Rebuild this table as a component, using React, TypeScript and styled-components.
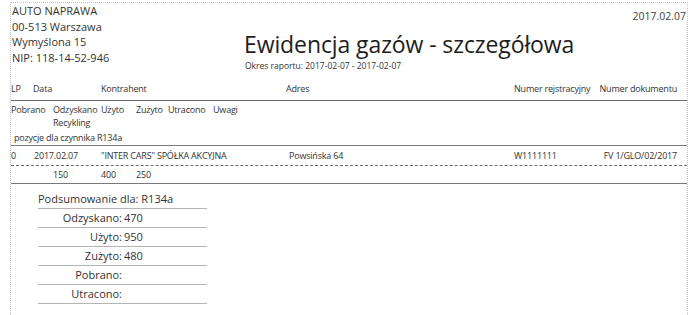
import React from 'react'
import styled, { createGlobalStyle } from 'styled-components'

const GlobalStyle = createGlobalStyle`
  html, body {
    margin: 0;
    padding: 0;
    background: #ffffff;
  }
  body {
    font-family: "Open Sans", "Noto Sans", sans-serif;
    color: #333333;
  }
`

const Page = styled.div`
  margin: 2px 0 0 10px;
  width: 678px;
  height: 313px;
  box-sizing: border-box;
  border-top: 1px dotted #c4c4c4;
  border-left: 1px dotted #c4c4c4;
  border-right: 1px dotted #c4c4c4;
  overflow: hidden;
`

const Header = styled.div`
  display: grid;
  grid-template-columns: 233px 1fr auto;
  height: 74px;
`

const Company = styled.div`
  font-size: 11px;
  line-height: 15.5px;
  color: #333;
  padding-left: 1px;
`

const TitleBlock = styled.div`
  padding-top: 27px;
`

const Title = styled.div`
  font-size: 23px;
  line-height: 28px;
  color: #1e1e1e;
  letter-spacing: -0.1px;
`

const Period = styled.div`
  font-size: 8.5px;
  line-height: 12px;
  margin-top: 2px;
  margin-left: 1px;
  color: #333;
`

const PrintDate = styled.div`
  font-size: 10.5px;
  line-height: 14px;
  padding-top: 6px;
  padding-right: 1px;
  color: #444;
`

const Row = styled.div<{ $cols: string; $border?: string; $height?: number }>`
  display: grid;
  grid-template-columns: ${(p) => p.$cols};
  padding-right: 10px;
  font-size: 9px;
  line-height: 13px;
  letter-spacing: -0.2px;
  color: #333;
  align-items: center;
  border-bottom: ${(p) => p.$border || 'none'};
  ${(p) => (p.$height ? `height: ${p.$height}px;` : '')}
`

const Cell = styled.div<{ $pl?: number; $align?: string }>`
  padding-left: ${(p) => p.$pl || 0}px;
  text-align: ${(p) => p.$align || 'left'};
  white-space: nowrap;
`

const SubHeader = styled(Row)`
  align-items: start;
  padding-top: 2px;
`

const GroupLabel = styled.div`
  font-size: 9px;
  line-height: 13px;
  letter-spacing: -0.2px;
  padding: 2px 0 1px 3px;
  border-bottom: 1px solid #7a7a7a;
`

const Summary = styled.div`
  margin: 5px 0 0 27px;
  width: 169px;
  font-size: 11px;
  color: #333;
`

const SummaryTitle = styled.div`
  height: 19px;
  line-height: 19px;
  border-bottom: 1px solid #b4b4b4;
`

const SummaryRow = styled.div`
  display: grid;
  grid-template-columns: 84px 1fr;
  height: 18px;
  line-height: 18px;
  border-bottom: 1px solid #b4b4b4;
`

const SummaryLabel = styled.span`
  text-align: right;
`

const SummaryValue = styled.span`
  padding-left: 2px;
`

const mainCols = '22px 68px 185px 228px 74px 1fr'
const subCols = '42px 48px 35px 32px 45px 1fr'

const summary = [
  { label: 'Odzyskano:', value: '470' },
  { label: 'Użyto:', value: '950' },
  { label: 'Zużyto:', value: '480' },
  { label: 'Pobrano:', value: '' },
  { label: 'Utracono:', value: '' },
]

export default function App() {
  return (
    <>
      <GlobalStyle />
      <Page>
        <Header>
          <Company>
            <div>AUTO NAPRAWA</div>
            <div>00-513 Warszawa</div>
            <div>Wymyślona 15</div>
            <div>NIP: 118-14-52-946</div>
          </Company>
          <TitleBlock>
            <Title>Ewidencja gazów - szczegółowa</Title>
            <Period>Okres raportu: 2017-02-07 - 2017-02-07</Period>
          </TitleBlock>
          <PrintDate>2017.02.07</PrintDate>
        </Header>

        <Row $cols={mainCols} $height={23} $border="1px solid #6a6a6a">
          <Cell>LP</Cell>
          <Cell>Data</Cell>
          <Cell>Kontrahent</Cell>
          <Cell>Adres</Cell>
          <Cell>Numer rejstracyjny</Cell>
          <Cell $align="right">Numer dokumentu</Cell>
        </Row>

        <SubHeader $cols={subCols}>
          <Cell>Pobrano</Cell>
          <Cell>
            Odzyskano
            <br />
            Recykling
          </Cell>
          <Cell>Użyto</Cell>
          <Cell>Zużyto</Cell>
          <Cell>Utracono</Cell>
          <Cell>Uwagi</Cell>
        </SubHeader>
        <GroupLabel>pozycje dla czynnika R134a</GroupLabel>

        <Row $cols={mainCols} $height={19} $border="1px dashed #6a6a6a">
          <Cell>0</Cell>
          <Cell $pl={1}>2017.02.07</Cell>
          <Cell>"INTER CARS" SPÓŁKA AKCYJNA</Cell>
          <Cell $pl={3}>Powsińska 64</Cell>
          <Cell>W1111111</Cell>
          <Cell $align="right">FV 1/GLO/02/2017</Cell>
        </Row>

        <Row $cols={subCols} $height={17} $border="1px solid #7a7a7a">
          <Cell />
          <Cell>150</Cell>
          <Cell>400</Cell>
          <Cell>250</Cell>
          <Cell />
          <Cell />
        </Row>

        <Summary>
          <SummaryTitle>Podsumowanie dla: R134a</SummaryTitle>
          {summary.map((s) => (
            <SummaryRow key={s.label}>
              <SummaryLabel>{s.label}</SummaryLabel>
              <SummaryValue>{s.value}</SummaryValue>
            </SummaryRow>
          ))}
        </Summary>
      </Page>
    </>
  )
}
